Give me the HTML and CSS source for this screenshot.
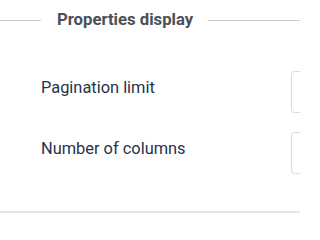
FILE: index.html
```html
<!DOCTYPE html>
<html>
<head>
<meta charset="utf-8">
<link rel="stylesheet" href="styles.css">
</head>
<body>
<section class="panel">
  <div class="legend">
    <span class="legend-line legend-line-left"></span>
    <h2 class="legend-title">Properties display</h2>
    <span class="legend-line legend-line-right"></span>
  </div>
  <div class="rows">
    <div class="row">
      <label class="row-label" for="pl">Pagination limit</label>
      <input class="row-input" id="pl" type="text">
    </div>
    <div class="row">
      <label class="row-label" for="nc">Number of columns</label>
      <input class="row-input" id="nc" type="text">
    </div>
  </div>
  <div class="divider"></div>
</section>
</body>
</html>
```
FILE: styles.css
```css
html, body {
  margin: 0;
  padding: 0;
  background: #ffffff;
}
.panel {
  width: 300px;
  font-family: Roboto, "Liberation Sans", sans-serif;
}
.legend {
  display: flex;
  align-items: center;
  height: 40px;
}
.legend-line {
  height: 1px;
  background: #c9cdd3;
}
.legend-line-left {
  width: 41px;
  flex: none;
}
.legend-line-right {
  flex: 1;
}
.legend-title {
  margin: 0;
  padding: 0 15px 0 16px;
  font-size: 16.7px;
  font-weight: 700;
  color: #4b5058;
  line-height: 20px;
  white-space: nowrap;
}
.rows {
  display: flex;
  flex-direction: column;
  gap: 19px;
  margin-top: 31px;
  padding-left: 41px;
}
.row {
  display: grid;
  grid-template-columns: 250px 1fr;
  align-items: start;
}
.row-label {
  font-size: 16.4px;
  line-height: 24px;
  color: #27334d;
  padding-top: 5px;
  white-space: nowrap;
}
.row-input {
  box-sizing: border-box;
  height: 42px;
  width: 100%;
  min-width: 0;
  margin: 0;
  padding: 0;
  border: 1px solid #d9dde3;
  border-right: none;
  border-radius: 4px 0 0 4px;
  background: #fff;
}
.divider {
  margin-top: 37px;
  height: 2px;
  background: #e3e6ea;
}
```
